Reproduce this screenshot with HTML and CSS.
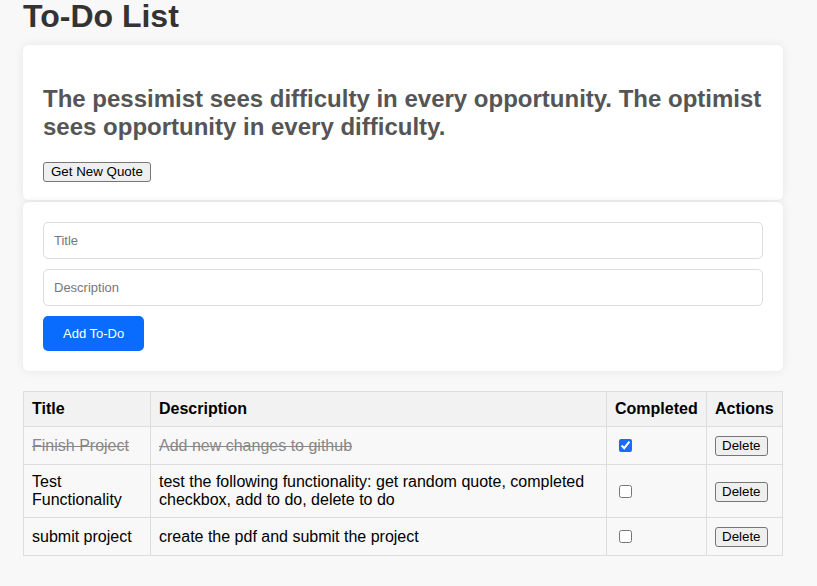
FILE: index.html
```html
<!DOCTYPE html>
<html lang="en">
<head>
<meta charset="utf-8">
<title>To-Do List</title>
<link rel="stylesheet" href="styles.css">
</head>
<body>
<div class="app">
  <h1 class="page-title">To-Do List</h1>

  <section class="card quote-card">
    <h2 class="quote">The pessimist sees difficulty in every opportunity. The optimist sees opportunity in every difficulty.</h2>
    <button class="btn-native quote-btn" type="button">Get New Quote</button>
  </section>

  <section class="card form-card">
    <input class="field" type="text" placeholder="Title">
    <input class="field" type="text" placeholder="Description">
    <button class="btn-primary" type="button">Add To-Do</button>
  </section>

  <table class="todo-table">
    <thead>
      <tr>
        <th class="col-title">Title</th>
        <th class="col-desc">Description</th>
        <th class="col-done">Completed</th>
        <th class="col-act">Actions</th>
      </tr>
    </thead>
    <tbody>
      <tr class="done">
        <td class="strike">Finish Project</td>
        <td class="strike">Add new changes to github</td>
        <td><input class="check" type="checkbox" checked></td>
        <td><button class="btn-native row-btn" type="button">Delete</button></td>
      </tr>
      <tr>
        <td>Test Functionality</td>
        <td>test the following functionality: get random quote, completed checkbox, add to do, delete to do</td>
        <td><input class="check" type="checkbox"></td>
        <td><button class="btn-native row-btn" type="button">Delete</button></td>
      </tr>
      <tr>
        <td>submit project</td>
        <td>create the pdf and submit the project</td>
        <td><input class="check" type="checkbox"></td>
        <td><button class="btn-native row-btn" type="button">Delete</button></td>
      </tr>
    </tbody>
  </table>
</div>
</body>
</html>
```

FILE: styles.css
```css
html, body {
  margin: 0;
  padding: 0;
}

body {
  background: #f8f8f8;
  font-family: "Liberation Sans", Arial, sans-serif;
  color: #333;
}

.app {
  width: 760px;
  padding: 0 23px;
}

.page-title {
  margin: 0 0 13px;
  font-size: 32px;
  line-height: 32px;
  font-weight: bold;
  color: #333;
}

.card {
  background: #fff;
  border-radius: 6px;
  box-shadow: 0 0 10px rgba(0, 0, 0, 0.08);
  padding: 20px;
}

.quote-card {
  padding-bottom: 18px;
}

.quote {
  margin: 20px 0 22px;
  font-size: 24px;
  line-height: 27.6px;
  font-weight: bold;
  color: #555;
}

.btn-native {
  font-family: "Liberation Sans", Arial, sans-serif;
  font-size: 13.33px;
  color: #000;
  background: #efefef;
  border: 1px solid #767676;
  border-radius: 3px;
  padding: 1px 7px;
  line-height: 16px;
}

.quote-btn {
  display: block;
}

.form-card {
  margin-top: 2px;
  display: flex;
  flex-direction: column;
  align-items: flex-start;
  gap: 10px;
}

.field {
  box-sizing: border-box;
  width: 100%;
  height: 37px;
  margin: 0;
  padding: 10px;
  border: 1px solid #dcdcdc;
  border-radius: 5px;
  font-family: "Liberation Sans", Arial, sans-serif;
  font-size: 13px;
  color: #333;
}

.field::placeholder {
  color: #777;
}

.btn-primary {
  height: 35px;
  padding: 0 20px;
  border: none;
  border-radius: 5px;
  background: #0a6cff;
  color: #fff;
  font-family: "Liberation Sans", Arial, sans-serif;
  font-size: 13px;
}

.todo-table {
  margin-top: 20px;
  width: 760px;
  border-collapse: collapse;
  table-layout: fixed;
  color: #000;
  font-size: 16px;
}

.todo-table th,
.todo-table td {
  box-sizing: border-box;
  border: 1px solid #dddddd;
  padding: 8px;
  text-align: left;
  line-height: 18px;
}

.todo-table th {
  background: #f2f2f2;
  font-weight: bold;
}

.col-title { width: 127px; }
.col-done { width: 100px; }
.col-act { width: 76px; }

.strike {
  color: #888;
  text-decoration: line-through;
}

.check {
  margin: 3px 3px 3px 4px;
  width: 13px;
  height: 13px;
  accent-color: #1a6bff;
  vertical-align: middle;
}

.row-btn {
  vertical-align: middle;
  margin: 1px 0 0;
  padding: 1px 6px;
}
```
